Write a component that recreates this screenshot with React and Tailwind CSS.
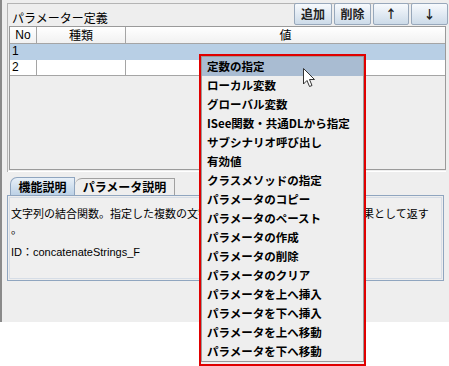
import React from "react";

const jp = { fontFamily: '"Noto Sans CJK JP", "Noto Sans", sans-serif' };
const lat = { fontFamily: '"Liberation Sans", "Noto Sans CJK JP", sans-serif' };

const menuItems = [
  "定数の指定",
  "ローカル変数",
  "グローバル変数",
  "ISee関数・共通DLから指定",
  "サブシナリオ呼び出し",
  "有効値",
  "クラスメソッドの指定",
  "パラメータのコピー",
  "パラメータのペースト",
  "パラメータの作成",
  "パラメータの削除",
  "パラメータのクリア",
  "パラメータを上へ挿入",
  "パラメータを下へ挿入",
  "パラメータを上へ移動",
  "パラメータを下へ移動",
];

function Btn({ w, children }) {
  return (
    <div
      className={`${w} h-[22px] flex items-center justify-center border border-[#98a8bb] rounded-[2px] bg-gradient-to-b from-[#f7fafd] to-[#cddbe9] text-[12px] font-bold text-[#222]`}
    >
      {children}
    </div>
  );
}

export default function App() {
  return (
    <div className="w-[449px] h-[366px] bg-white relative overflow-hidden text-black" style={jp}>
      <div className="h-[322px] bg-[#eeeeee] border-l-2 border-[#8a8a8a] flex flex-col">
        <div className="ml-[5px] mt-[3px] w-[439px] border-t border-l border-[#b4b4b4] flex flex-col">
          <div className="h-[22px] flex items-start justify-between">
            <div className="pl-[4px] pt-[6px] text-[12px] leading-[16px]">パラメーター定義</div>
            <div className="flex gap-[2px] -mt-[1px] -mr-[2px]">
              <Btn w="w-[38px]">追加</Btn>
              <Btn w="w-[37px]">削除</Btn>
              <Btn w="w-[36px]">↑</Btn>
              <Btn w="w-[37px]">↓</Btn>
            </div>
          </div>
          <div className="h-[144px] w-[437px] border border-[#9a9a9a] ml-[1px] bg-[#eeeeee] flex flex-col">
            <div className="flex h-[17px] text-[12px] leading-[16px] bg-gradient-to-b from-white to-[#f1f1f1] border-b border-[#a5a5a5]">
              <div className="w-[27px] border-r border-[#a5a5a5] text-center" style={lat}>No</div>
              <div className="w-[89px] border-r border-[#a5a5a5] text-center">種類</div>
              <div className="flex-1 text-center">値</div>
            </div>
            <div className="flex h-[16px] text-[12px] leading-[15px] bg-[#b8cfe5]" style={lat}>
              <div className="w-[27px] pl-[2px]">1</div>
              <div className="w-[89px]"></div>
              <div className="flex-1"></div>
            </div>
            <div className="flex h-[16px] text-[12px] leading-[15px] bg-white border-b border-[#a5a5a5]" style={lat}>
              <div className="w-[27px] pl-[2px] border-r border-[#a5a5a5]">2</div>
              <div className="w-[89px] border-r border-[#a5a5a5]"></div>
              <div className="flex-1"></div>
            </div>
          </div>
          <div className="h-[1px] mt-[1px] bg-white"></div>
        </div>

        <div className="ml-[5px] mt-[5px] w-[437px] flex flex-col">
          <div className="flex items-end h-[18px] pl-[3px]">
            <div className="w-[65px] h-[18px] rounded-tl-[7px] border border-b-0 border-[#8fa5bf] bg-gradient-to-b from-[#e8f0f8] to-[#bcd1e6] text-[12px] font-bold text-center leading-[17px]">
              機能説明
            </div>
            <div className="w-[100px] h-[17px] rounded-tl-[7px] border border-b-0 border-l-0 border-[#a0a0a0] bg-[#eeeeee] text-[12px] font-bold text-center leading-[16px]">
              パラメータ説明
            </div>
          </div>
          <div className="h-[86px] border border-[#8fa5bf] p-[1px]">
            <div className="h-full border border-[#d6dde6] bg-[#efefef] pl-[1px] text-[11px] leading-[16px]">
              <div className="pt-[7px] whitespace-nowrap overflow-hidden">文字列の結合関数。指定した複数の文字列を順に結合し、その結合の結果として返す</div>
              <div>。</div>
              <div className="mt-[7px]" style={lat}>ID：concatenateStrings_F</div>
            </div>
          </div>
        </div>
      </div>

      <div className="absolute left-[199px] top-[54px] w-[167px] h-[312px] border-2 border-[#e00000] bg-[#eeeeee]">
        <div className="border border-[#9a9a9a] h-[306px] flex flex-col">
          {menuItems.map((t, i) => (
            <div
              key={i}
              className={`h-[19px] pl-[5px] text-[11.5px] font-bold leading-[19px] whitespace-nowrap ${i === 0 ? "bg-[#a9bcd2]" : ""}`}
            >
              {t}
            </div>
          ))}
        </div>
      </div>

      <svg className="absolute left-[303px] top-[68px]" width="14" height="21" viewBox="0 0 14 21">
        <path d="M0.5 0.5 L0.5 16 L4 12.5 L6.5 18.5 L9 17.5 L6.5 11.5 L11.5 11.5 Z" fill="white" stroke="#333" strokeWidth="1" strokeLinejoin="miter" />
      </svg>
    </div>
  );
}
